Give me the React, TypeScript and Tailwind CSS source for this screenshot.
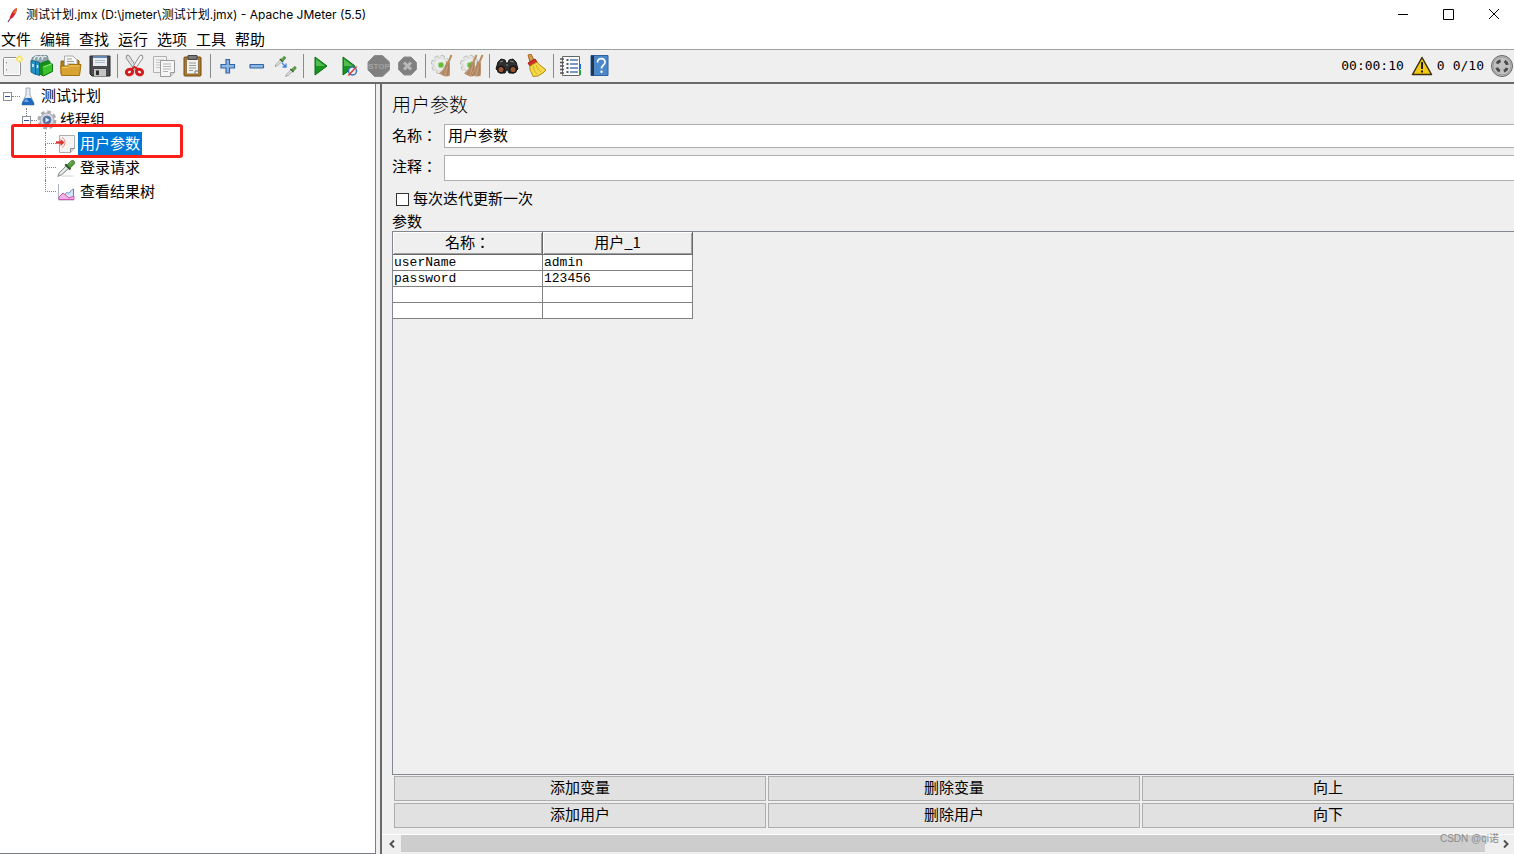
import type { ReactNode } from 'react';

/**
 * JMeter main window
 * Title bar, menu, toolbar, test plan tree and the user parameters form
 */

const menus = ['文件', '编辑', '查找', '运行', '选项', '工具', '帮助'];

const parameters = [
  { name: 'userName', value: 'admin' },
  { name: 'password', value: '123456' },
  { name: '', value: '' },
  { name: '', value: '' },
];

const actions = ['添加变量', '删除变量', '向上', '添加用户', '删除用户', '向下'];

function Icon({ children }: { children: ReactNode }) {
  return (
    <svg viewBox="0 0 24 24" className="h-6 w-6 shrink-0" fill="none" aria-hidden="true">
      {children}
    </svg>
  );
}

function Broom({ x = 0 }: { x?: number }) {
  return (
    <g transform={`translate(${x} 0)`}>
      <path d="M20.500 1 17.500 8" stroke="#b98f63" strokeWidth="2" />
      <path d="M15.500 7 19 8.500C18.500 14 19.500 18 18.500 22L14 22.500 8 19.500C12 16.500 14.500 12 15.500 7Z" fill="#b58c66" />
      <path d="M15.500 11 11 20.500M17.500 11 16.500 22" stroke="#9b7755" strokeWidth=".7" />
      <path d="M14 14 10 20M16.500 12 14 22" stroke="#d0ad88" strokeWidth=".7" />
    </g>
  );
}

function PaleGear() {
  return (
    <>
      <circle cx="9.500" cy="10.500" r="7.500" stroke="#b4b7b4" strokeWidth="4" strokeDasharray="3.700 2.190" />
      <circle cx="9.500" cy="10.500" r="7.500" fill="#dfe1df" stroke="#c6c9c6" strokeWidth=".7" />
      <circle cx="9.500" cy="10.500" r="7.200" stroke="#e4e6e4" strokeWidth="3" strokeDasharray="3 2.655" />
      <circle cx="9.500" cy="10.500" r="5.500" fill="#eceeec" />
      <circle cx="10" cy="11" r="2.800" fill="#5fbf2c" stroke="#a9cf98" />
    </>
  );
}

function Dropper() {
  return (
    <>
      <ellipse cx="13" cy="20.500" rx="8" ry="1.200" fill="#e6e6e6" />
      <path d="m2 21 1.500-4 8-8 3 3-8 7Z" fill="#cdd6d0" stroke="#7d8580" strokeWidth="1" />
      <path d="m5 18 7-7" stroke="#f7faf8" strokeWidth="1.200" />
      <path d="m10.500 7 6 6" stroke="#31562a" strokeWidth="2.400" />
      <path d="m12.500 8 4.500-4.500c2.500-2 5.500 1 3.500 3.500L16 11.500Z" fill="#579c3d" stroke="#34702a" />
      <path d="m15 7 3-3" stroke="#9ccb84" />
    </>
  );
}

const toolGroups: { label: string; icon: ReactNode }[][] = [
  [
    {
      label: '新建',
      icon: (
        <>
          <rect x="2.500" y="3.500" width="17" height="18" rx="1" fill="#f0f0f0" stroke="#8f8f8f" />
          <path d="M3.500 4.500h15v16h-15Z" stroke="#fff" />
          <path d="M5.500 8v1.500M5.500 15v1.500" stroke="#999" />
          <circle cx="18.500" cy="5" r="3.500" fill="#f9ee92" />
          <path d="m18.500 1 1.200 2.700L22.500 5l-2.800 1.200L18.500 9l-1.200-2.800L14.500 5l2.800-1.300Z" fill="#f4dc45" />
          <circle cx="18.500" cy="5" r="1.600" fill="#fffbe0" />
        </>
      ),
    },
    {
      label: '模板',
      icon: (
        <>
          <path d="M2 4 6 1.500h11L18 4v8l-9 6-7-3Z" fill="#8ea3a9" stroke="#728b92" />
          <path d="M4 6c0-4 4-5 4-2.500M8 6c0-4 4-5 4-2.500M12 6c0-4 4-5 4-2.500" stroke="#e9f2f4" strokeWidth="1.200" />
          <path d="m1 6.500 4.500 1v13L1 18Z" fill="#2794c8" stroke="#0a6795" />
          <path d="m5.500 7.500 4 1V21.500l-4-1.500Z" fill="#1e8fc4" stroke="#0a6795" />
          <path d="M3 10v3M7.500 11v3" stroke="#eafaff" strokeWidth="1.500" />
          <path d="m9.500 10.500 2-1.500 7-2.500 1.500 1v2l2.500.5v7.500l-9 4.500-4-2Z" fill="#178f1c" stroke="#0f7a17" />
          <path d="m12.500 12.500 9.500-3.500v8l-8.500 4.500Z" fill="#3bc22d" />
          <path d="m13.500 13 8-3" stroke="#8df07c" />
        </>
      ),
    },
    {
      label: '打开',
      icon: (
        <>
          <path d="M2 10V7h4l1-1h12l1 1v13H2Z" fill="#a97a16" stroke="#8e6510" />
          <path d="M5.500 2H14l4 4v8H5.500Z" fill="#f8f8f8" stroke="#aaa" />
          <path d="M8 5h5M8 7.500h7M8 10h8" stroke="#999" />
          <path d="M1.500 12h7l1.500-1.500h12L20.500 21.500h-18Z" fill="#d9a333" stroke="#a3740e" />
          <path d="M3 13.500h6l1.500-1.500H20" stroke="#f0c869" />
        </>
      ),
    },
    {
      label: '保存',
      icon: (
        <>
          <path d="M2 2h20v20H4l-2-2Z" fill="#4b4b4f" stroke="#252527" />
          <path d="M5 2h14v10H5Z" fill="#e8edf3" />
          <path d="M5 2h14v2H5Z" fill="#6687b2" />
          <path d="M7 6.500h10M7 8.500h10" stroke="#b2bdc9" />
          <path d="M6 15h12v7H6Z" fill="#c4c4c4" />
          <path d="M8 16.500h3V21H8Z" fill="#2d2d2e" />
        </>
      ),
    },
  ],
  [
    {
      label: '剪切',
      icon: (
        <>
          <path d="m4 1 2 .5 9 14-3 1L3 4Z" fill="#e0e0e0" stroke="#8d8d8d" />
          <path d="m19 1-2 .5-9 14 3 1L20 4Z" fill="#f3f3f3" stroke="#8d8d8d" />
          <ellipse cx="6.500" cy="18" rx="3.200" ry="2.700" stroke="#d31d20" strokeWidth="3" transform="rotate(-25 6.500 18)" />
          <ellipse cx="16.500" cy="18" rx="3.200" ry="2.700" stroke="#d31d20" strokeWidth="3" transform="rotate(25 16.500 18)" />
          <path d="m9 15 2.500-2 3 2" stroke="#d31d20" strokeWidth="2" />
        </>
      ),
    },
    {
      label: '复制',
      icon: (
        <>
          <path d="M1.500 2.500h13v16h-13Z" fill="#f2f2f2" stroke="#b1b1b1" />
          <path d="M4 6h8M4 8.500h8M4 11h5M4 13.500h5" stroke="#c5c5c5" />
          <path d="M8.500 6.500h14v12l-4 4h-10Z" fill="#f6f6f6" stroke="#999" />
          <path d="M11 10h8M11 12.500h8M11 15h8M11 17.500h5" stroke="#b2b2b2" />
          <path d="M18.500 22.500v-4h4" fill="#ddd" stroke="#999" />
        </>
      ),
    },
    {
      label: '粘贴',
      icon: (
        <>
          <rect x="3" y="3" width="17" height="19" rx="1" fill="#b57a24" stroke="#70480f" />
          <path d="M5.500 5h12v15h-12Z" fill="#f1f1ed" stroke="#8d744a" />
          <path d="M7 1.500h9v4H7Z" fill="#7b7c79" stroke="#444" />
          <path d="M8 9h7M8 11.500h7M8 14h7M8 16.500h4" stroke="#999" />
          <path d="M14 20v-3h3" stroke="#777" />
        </>
      ),
    },
  ],
  [
    {
      label: '展开目录',
      icon: <path d="M10 5.500h3.500v5h5V14h-5v5H10v-5H5v-3.500h5Z" fill="#8db7e3" stroke="#3465a4" strokeWidth="1.200" />,
    },
    {
      label: '折叠目录',
      icon: <rect x="5" y="10.500" width="13.500" height="3.500" rx=".5" fill="#8db7e3" stroke="#3465a4" strokeWidth="1.200" />,
    },
    {
      label: '切换',
      icon: (
        <>
          <g transform="translate(0 1) scale(.55)">
            <Dropper />
          </g>
          <g transform="translate(10.500 11) scale(.55)">
            <Dropper />
          </g>
          <path d="m8 9 4 4m0-3.500V13H8.500" stroke="#4381e8" strokeWidth="1.300" />
        </>
      ),
    },
  ],
  [
    {
      label: '启动',
      icon: (
        <>
          <path d="M6 3v18l12-9Z" fill="#189421" stroke="#087112" />
          <path d="M7 5v7h9Z" fill="#52bb51" />
        </>
      ),
    },
    {
      label: '不停顿开始',
      icon: (
        <>
          <path d="M5 3v18l12-9Z" fill="#189421" stroke="#087112" />
          <path d="M6 5v7h9Z" fill="#52bb51" />
          <circle cx="14.500" cy="17" r="4" fill="#eef3f8" stroke="#3971b5" strokeWidth="1.500" />
          <path d="m10.500 21.500 8-9" stroke="#e03835" strokeWidth="1.500" />
        </>
      ),
    },
    {
      label: '停止',
      icon: (
        <>
          <path d="M7.500 1.500h8L22.500 8v8l-7 6.500h-8L1 16V8Z" fill="#808080" stroke="#8f8f8f" />
          <text x="12" y="15" textAnchor="middle" fontSize="8" fontWeight="700" fontFamily="Liberation Sans, sans-serif" fill="#a3a3a3">
            STOP
          </text>
        </>
      ),
    },
    {
      label: '关闭',
      icon: (
        <>
          <path d="M8 3h7l5.500 5.500v7L15 21H8l-5.500-5.500v-7Z" fill="#808080" stroke="#8f8f8f" />
          <path d="m8 8.500 7 7m0-7-7 7" stroke="#b9b9b9" strokeWidth="3" />
        </>
      ),
    },
  ],
  [
    {
      label: '清除',
      icon: (
        <>
          <PaleGear />
          <Broom />
        </>
      ),
    },
    {
      label: '清除全部',
      icon: (
        <>
          <PaleGear />
          <Broom x={-4} />
          <Broom x={2} />
        </>
      ),
    },
  ],
  [
    {
      label: '查找',
      icon: (
        <>
          <path d="m3 8 3-3 4 1 1 3h2l1-3 4-1 3 3 2 7-4 4h-5l-2-4-2 4H5l-4-4Z" fill="#303032" stroke="#171718" />
          <circle cx="6" cy="15.500" r="3.300" fill="#9a5631" stroke="#171718" strokeWidth="1.500" />
          <circle cx="18" cy="15.500" r="3.300" fill="#9a5631" stroke="#171718" strokeWidth="1.500" />
          <path d="m5 8 3-1M15 7l4 1M11 11h2" stroke="#898989" />
        </>
      ),
    },
    {
      label: '清除查找',
      icon: (
        <>
          <path d="m4 1 3-1 3 6-4 2Z" fill="#d5994c" stroke="#a46a21" />
          <path d="m4 9 7-4 2 3-7 4Z" fill="#d33126" stroke="#a31a16" />
          <path d="M6 12 13 8c3 4 6 5 9 8l-3 3-2 1-3 2-5 .5C8 19 5 16 6 12Z" fill="#f5d848" stroke="#b18b12" />
          <path d="M9 12c1 4 2 6 4 8M12 11c2 4 3 5 5 7" stroke="#d3ac25" />
        </>
      ),
    },
  ],
  [
    {
      label: '函数助手对话框',
      icon: (
        <>
          <path d="M3.500 2.500h17v19h-17Z" fill="#fcfcfc" stroke="#666" />
          <path d="M1 5h4M1 8.500h4M1 12h4M1 15.500h4M1 19h4" stroke="#555" strokeWidth="1.400" />
          <path d="M7.500 6h2M7.500 10h2M7.500 14h2M7.500 18h2" stroke="#222" strokeWidth="1.500" />
          <path d="M11 6h8M11 10h8M11 14h8M11 18h8" stroke="#4e78b0" strokeWidth="1.300" />
          <path d="M20 10h2v5h-2Z" fill="#1670cf" />
          <path d="M20 16h2v5h-2Z" fill="#1fa33a" />
        </>
      ),
    },
    {
      label: '帮助',
      icon: (
        <>
          <path d="M3 1.500h17v20H3Z" fill="#4a87cb" stroke="#2f64a1" />
          <path d="M3 1.500h3v20H3Z" fill="#25354c" />
          <path d="M9.500 8.500C9.500 3 17.500 3.500 17 8.500c-.3 2.500-3.500 3-3.500 6" stroke="#fff" strokeWidth="1.700" />
          <circle cx="13.500" cy="17.800" r="1.200" fill="#fff" />
        </>
      ),
    },
  ],
];

function TitleBar() {
  return (
    <header className="flex h-[30px] items-center bg-white pl-1">
      <svg viewBox="0 0 16 16" className="h-4 w-4" fill="none" aria-hidden="true">
        <path d="m4 15 2-3" stroke="#6b3a7c" strokeWidth="1.200" />
        <path d="M5.500 12.500C6 8 9 2 13 1c0 4-3 10-7.500 11.500Z" fill="#d22230" />
        <path d="M9 6c1-2 2.500-4 4-5 0 2-.5 4-1.500 6Z" fill="#ee7328" />
      </svg>
      <h1 className="ml-1.5 flex-1 font-['Inter','Noto_Sans_CJK_SC',sans-serif] text-xs">
        测试计划.jmx (D:\jmeter\测试计划.jmx) - Apache JMeter (5.5)
      </h1>
      <div className="flex gap-[5px]">
        <button aria-label="最小化" className="flex h-7 w-10 items-center justify-center">
          <svg viewBox="0 0 12 12" className="h-3 w-3" stroke="#000" aria-hidden="true">
            <path d="M0 5.500h10" />
          </svg>
        </button>
        <button aria-label="最大化" className="flex h-7 w-10 items-center justify-center">
          <svg viewBox="0 0 12 12" className="h-3 w-3" fill="none" stroke="#000" aria-hidden="true">
            <path d="M.5.500h10v10H.5Z" />
          </svg>
        </button>
        <button aria-label="关闭" className="flex h-7 w-10 items-center justify-center">
          <svg viewBox="0 0 12 12" className="h-3 w-3" stroke="#000" aria-hidden="true">
            <path d="m1 0 10 10M11 0 1 10" />
          </svg>
        </button>
      </div>
    </header>
  );
}

function Toolbar() {
  return (
    <div className="flex h-[34px] items-center border-b-2 border-[#696969] bg-[#efefef]">
      <div className="-ml-0.5 flex items-center">
        {toolGroups.map((group, i) => (
          <div key={i} className="flex items-center">
            {i > 0 && <span className="mr-0.5 ml-[3px] h-6 w-px bg-[#8a8a8a]" />}
            {group.map((tool) => (
              <button key={tool.label} aria-label={tool.label} className="flex w-[29px] justify-center">
                <Icon>{tool.icon}</Icon>
              </button>
            ))}
          </div>
        ))}
      </div>
      {/* Elapsed time, log errors and active threads */}
      <div className="ml-auto flex items-center font-['DejaVu_Sans_Mono',monospace] text-[13px]">
        <span>00:00:10</span>
        <button className="ml-[7px] flex items-center gap-1" aria-label="日志错误 0">
          <svg viewBox="0 0 22 20" className="h-5 w-[22px]" aria-hidden="true">
            <path d="M11 1.500 20.500 18.500h-19Z" fill="#f6c915" stroke="#38300c" strokeWidth="1.500" strokeLinejoin="round" />
            <path d="M11 6v7M11 14.500v2" stroke="#222" strokeWidth="2" />
          </svg>
          <span>0</span>
        </button>
        <span className="ml-2">0/10</span>
        <span className="ml-1.5">
          <Icon>
            <circle cx="12" cy="12" r="10.500" fill="#c1c1c1" stroke="#656565" />
            <circle cx="12" cy="12" r="9" stroke="#9b9b9b" />
            <circle cx="12" cy="12" r="5.500" stroke="#4b4b4b" strokeWidth="3" strokeDasharray="4.500 4.140" strokeDashoffset="-2" />
          </Icon>
        </span>
      </div>
    </div>
  );
}

function Expander() {
  return (
    <button aria-label="折叠" className="flex h-[9px] w-[9px] items-center justify-center border border-[#8c9199] bg-white">
      <span className="h-px w-[5px] bg-[#2b50a8]" />
    </button>
  );
}

interface LeafProps {
  label: string;
  icon: ReactNode;
  selected?: boolean;
  last?: boolean;
}

function Leaf({ label, icon, selected, last }: LeafProps) {
  return (
    <li className="flex h-6 items-center pl-[45px]">
      <span className="flex h-6 w-[11px] flex-col">
        <span className="h-3 border-b border-l border-dotted border-[#808080]" />
        {!last && <span className="flex-1 border-l border-dotted border-[#808080]" />}
      </span>
      <svg viewBox="0 0 20 20" className="mr-0.5 h-5 w-5" fill="none" aria-hidden="true">
        {icon}
      </svg>
      <span className={`h-6 px-0.5 leading-[21px] ${selected ? 'bg-[#0078d7] text-white' : ''}`}>{label}</span>
    </li>
  );
}

function TestPlanTree() {
  return (
    <nav aria-label="测试计划" className="relative mr-1 w-[376px] shrink-0 border-r border-b border-[#7a7d85] bg-white">
      <ul>
        <li className="flex h-6 items-center pl-[3px]">
          <Expander />
          <span className="w-2 border-t border-dotted border-[#808080]" />
          <svg viewBox="0 0 16 20" className="h-5 w-4" fill="none" aria-hidden="true">
            <path d="M6 2h4v7l4 8v2H2v-2l4-8Z" fill="#e3edf5" stroke="#a2adb8" />
            <path d="m5 12-3 5v2h12v-2l-3-5Z" fill="#2169bc" />
            <path d="m6 12-2 4h5" fill="#68a6e6" />
          </svg>
          <span className="ml-[5px] h-6 leading-[21px]">测试计划</span>
        </li>
        <li className="flex h-6 items-center pl-[22px]">
          <span className="flex h-6 flex-col">
            <span className="ml-1 h-2 border-l border-dotted border-[#808080]" />
            <Expander />
          </span>
          <span className="w-1.5 border-t border-dotted border-[#808080]" />
          <svg viewBox="0 0 20 20" className="h-5 w-5" fill="none" aria-hidden="true">
            <circle cx="10" cy="10" r="8" stroke="#a9abb0" strokeWidth="3" strokeDasharray="3.600 2.680" />
            <circle cx="10" cy="10" r="7" fill="#d7d9dd" stroke="#a4a7ac" />
            <circle cx="10" cy="10" r="4" fill="#4a72b0" stroke="#6c7f9c" />
            <path d="m8.500 7.500 4 2.500-4 2.500Z" fill="#e7f0ff" />
          </svg>
          <span className="ml-[3px] h-6 leading-[21px]">线程组</span>
        </li>
        <Leaf
          label="用户参数"
          selected
          icon={
            <>
              <path d="M3.500 1.500h15v13l-4 4h-11Z" fill="#f4f4f4" stroke="#adadad" />
              <path d="M14.500 18.500v-4h4" fill="#ddd" stroke="#888" />
              <path d="M0 8.500h6" stroke="#d93632" strokeWidth="2.400" />
              <path d="M4.500 5 8.500 8.500 4.500 12Z" fill="#d93632" />
              <path d="M6 3.500c4 2 4 8 0 10" stroke="#e58b86" />
            </>
          }
        />
        <Leaf
          label="登录请求"
          icon={
            <g transform="scale(.88)">
              <Dropper />
            </g>
          }
        />
        <Leaf
          label="查看结果树"
          last
          icon={
            <>
              <path d="M2.500 2v16H18" stroke="#aab4ca" />
              <path d="M9 15c0-4 1-5 3-4s3-4 5.500-4v10Z" fill="#d4e2fa" stroke="#5484d0" />
              <path d="m3 15 4-4 6 5 5-2v3.500H3Z" fill="#f0b4e0" stroke="#cf56b5" />
            </>
          }
        />
      </ul>
      {/* Highlight frame around the selected element */}
      <div className="pointer-events-none absolute top-10 left-[11px] h-[34px] w-[172px] rounded-[3px] border-3 border-[#fb1f17]" />
    </nav>
  );
}

function ParameterTable() {
  const headerCell =
    'h-[22px] border-r border-b border-[#696969] p-0 align-top font-normal leading-5 shadow-[inset_1px_1px_#fff,inset_-1px_-1px_#a0a0a0]';
  const bodyCell = 'h-4 border-r border-b border-[#808080] bg-white py-0 pr-0 pl-px leading-[15px]';

  return (
    <table className="w-[300px] table-fixed border-separate border-spacing-0">
      <thead className="font-['Noto_Sans_CJK_JP',sans-serif]">
        <tr className="h-[23px]">
          <th className={headerCell}>名称：</th>
          <th className={headerCell}>用户_1</th>
        </tr>
      </thead>
      <tbody className="font-['Liberation_Mono',monospace] text-[13px]">
        {parameters.map((p, i) => (
          <tr key={i}>
            <td className={bodyCell}>{p.name}</td>
            <td className={bodyCell}>{p.value}</td>
          </tr>
        ))}
      </tbody>
    </table>
  );
}

function UserParameters() {
  const fieldLabel = "w-[52px] font-['Noto_Sans_CJK_JP','Noto_Sans_CJK_SC',sans-serif] leading-[22px]";
  const field = 'h-full min-w-0 flex-1 border border-r-0 border-[#abadb3] bg-white px-[3px] pb-1 leading-5 outline-none';

  return (
    <main className="relative flex min-w-0 flex-1 flex-col border-l-2 border-[#696969]">
      <form className="flex flex-1 flex-col pl-[10px]">
        <h2 className="mt-2 text-[19px] leading-6 font-light">用户参数</h2>
        <label className="mt-2 flex h-6">
          <span className={fieldLabel}>名称：</span>
          <input type="text" defaultValue="用户参数" className={field} />
        </label>
        <label className="mt-[7px] flex h-[26px]">
          <span className={fieldLabel}>注释：</span>
          <input type="text" className={field} />
        </label>
        <label className="mt-2 flex h-5 items-center pl-1">
          <input type="checkbox" className="h-[13px] w-[13px] appearance-none border border-[#333] bg-white" />
          <span className="ml-1 h-5 leading-[18px]">每次迭代更新一次</span>
        </label>
        <h3 className="mt-0.5 h-5 leading-5">参数</h3>
        <div className="flex-1 border border-r-0 border-[#828790]">
          <ParameterTable />
        </div>
        <div className="mt-px grid grid-cols-3 gap-0.5 pl-0.5">
          {actions.map((action) => (
            <button key={action} type="button" className="h-[25px] border border-[#adadad] bg-[#e1e1e1] pb-[3px] leading-5">
              {action}
            </button>
          ))}
        </div>
      </form>
      {/* Horizontal scroll bar */}
      <div className="mt-1.5 flex h-5 border-t border-white pb-0.5">
        <button aria-label="向左滚动" className="flex w-[19px] items-center justify-center">
          <svg viewBox="0 0 8 8" className="h-2 w-2" fill="none" stroke="#505050" strokeWidth="2" aria-hidden="true">
            <path d="M6 .5 2.500 4 6 7.500" />
          </svg>
        </button>
        <div className="flex-1 bg-[#cdcdcd]" />
        <button aria-label="向右滚动" className="flex w-[29px] items-center justify-end pr-1">
          <svg viewBox="0 0 8 8" className="h-2 w-2" fill="none" stroke="#505050" strokeWidth="2" aria-hidden="true">
            <path d="M2 .5 5.500 4 2 7.500" />
          </svg>
        </button>
      </div>
      <span className="absolute right-[15px] bottom-2 font-['Liberation_Sans','Noto_Sans_CJK_SC',sans-serif] text-[10px] leading-[14px] text-[#8c8c8c]">
        CSDN @qi诺
      </span>
    </main>
  );
}

export default function App() {
  return (
    <div className="flex h-screen flex-col overflow-hidden bg-[#efefef] font-['Noto_Sans_CJK_SC',sans-serif] text-[15px] text-black">
      <TitleBar />
      <nav aria-label="菜单" className="flex h-5 gap-[9px] border-b border-[#a0a0a0] bg-white pl-px">
        {menus.map((menu) => (
          <button key={menu} className="h-[18px] leading-[18px]">
            {menu}
          </button>
        ))}
      </nav>
      <Toolbar />
      <div className="flex min-h-0 flex-1">
        <TestPlanTree />
        <UserParameters />
      </div>
    </div>
  );
}
